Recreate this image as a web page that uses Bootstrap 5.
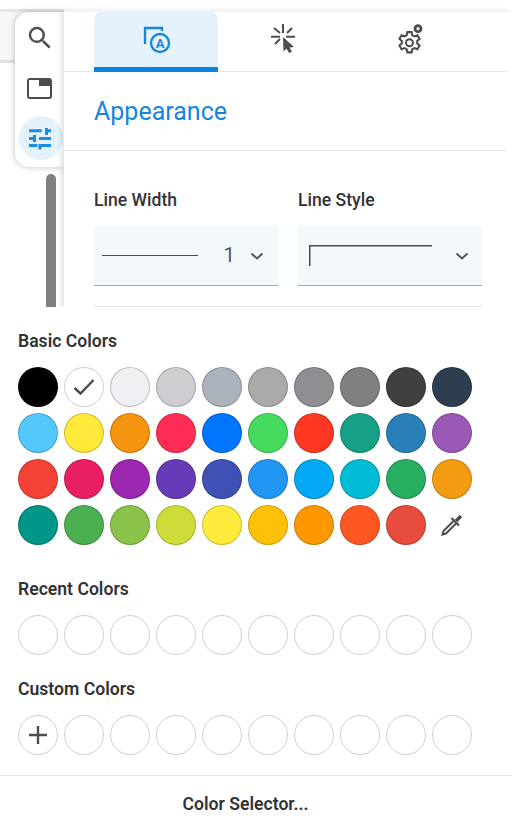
<!DOCTYPE html>
<html lang="en">
<head>
<meta charset="utf-8">
<title>Appearance</title>
<link href="https://cdn.jsdelivr.net/npm/bootstrap@5.3.0/dist/css/bootstrap.min.css" rel="stylesheet">
<style>
html,body{height:830px;overflow:hidden;background:#fff;font-family:Roboto,"Liberation Sans",sans-serif;color:#333}
.stage{width:512px;height:307px;overflow:hidden}
.rail{width:64px;height:307px;position:relative;background:linear-gradient(#fff 0 9px,#e6e6e6 9px 12px,#f7f7f7 12px 60px,#e0e0e0 60px 63px,#fff 63px)}
.toolstrip{position:absolute;left:15px;top:12px;width:49px;height:155px;background:#fff;border-radius:14px 0 0 14px;box-shadow:0 0 6px rgba(0,0,0,.25);padding-top:4px}
.toolbtn{width:44px;height:44px;border-radius:50%;margin:0 0 6px 4px}
.toolbtn svg{margin-right:3px}
.toolbtn.on{background:#e4f2fd}
.thumb{position:absolute;left:46px;top:174px;width:10px;height:133px;background:#808080;border-radius:5px 5px 0 0}
.sheet{margin-top:11px;height:296px;width:448px;background:#fff;border-top:1px solid #f3f3f3;box-shadow:-3px 0 5px rgba(0,0,0,.12);position:relative}
.tabrow{height:60px;width:443px;padding-left:30px;gap:3px;border-bottom:1px solid #e4e4e4}
.tabcell{width:124px;height:60px;padding-top:12px;text-align:center}
.tabcell svg{display:inline-block;vertical-align:top}
.tabcell.on{background:#e4f2fd;border-radius:7px 7px 0 0;border-bottom:5px solid #0a84dc}
.paneltitle{width:443px;height:79px;padding:24px 0 0 30px;border-bottom:1px solid #e4e4e4;color:#1486e0;font-size:25px;line-height:32px;font-weight:400;margin:0}
.fields{padding:34px 0 0 30px;gap:20px;width:418px}
.fieldcol{width:184px}
.fieldname{font-size:17.6px;font-weight:500;line-height:30px;height:41px;color:#333}
.pickbox{height:60px;background:#f3f8fc;border-bottom:1px solid #7ab0e0;padding:0 14px 0 8px;color:#555;font-size:20.5px}
.pickbox.styled{padding-left:11px;padding-right:13px}
.lineprev{display:block;width:96px;height:1.5px;background:#4d4d4d}
.sizeval{margin-right:15px}
.sep{margin:20px 0 0 30px;width:388px;height:1px;background:#e4e4e4}
.popup{height:523px;background:#fff;border-radius:0 12px 0 0;position:relative}
.heading{font-size:17.6px;font-weight:600;line-height:24px;margin:0;color:#333}
.dots{display:flex;flex-wrap:wrap;gap:6px;width:460px}
.dot{width:40px;height:40px;border-radius:50%;border:1px solid rgba(0,0,0,.2);display:flex;align-items:center;justify-content:center}
.dot.blank{border-color:#d0d0d0;background:#fff}
.dot.bare{border-color:transparent}
.basic{padding:22px 0 0 18px}
.basic .heading{margin-bottom:14px}
.recent{padding:32px 0 0 18px}
.recent .heading,.custom .heading{margin-bottom:14px}
.custom{padding:22px 0 0 18px}
.footbar{height:56px;width:491px;line-height:56px;text-align:center;font-size:17.6px;font-weight:600;color:#333}
.footwide{border-top:1px solid #e4e4e4;margin-top:20px}
</style>
</head>
<body>
<div class="stage d-flex">
  <div class="rail flex-shrink-0">
    <div class="thumb"></div>
    <div class="toolstrip">
      <div class="toolbtn d-flex align-items-center justify-content-center">
        <svg width="30" height="30" viewBox="0 0 24 24"><path fill="#4d4d4d" d="M15.5 14h-.79l-.28-.27A6.471 6.471 0 0 0 16 9.500 6.500 6.500 0 1 0 9.500 16c1.610 0 3.090-.59 4.230-1.570l.27.28v.79l5 4.990L20.490 19l-4.990-5zm-6 0C7.010 14 5 11.990 5 9.500S7.010 5 9.500 5 14 7.010 14 9.500 11.990 14 9.500 14z"/></svg>
      </div>
      <div class="toolbtn d-flex align-items-center justify-content-center">
        <svg width="25" height="21" viewBox="0 0 25 21"><rect x="1" y="1" width="23" height="19" rx="2" fill="none" stroke="#4d4d4d" stroke-width="2"/><path fill="#4d4d4d" d="M12 1h12v7H12z"/></svg>
      </div>
      <div class="toolbtn on d-flex align-items-center justify-content-center">
        <svg width="24" height="23" viewBox="0 0 24 23"><path fill="#1a8ee6" d="M1 2.300h12.700v3H1zM17 1h3v1.300h3v3h-3V8h-3zM1 10h4V8h3v7H5v-2H1zM11 10h12v3H11zM1 17h8.500v3H1zM10.500 17H23v3h-9.500v2.500h-3z"/></svg>
      </div>
    </div>
  </div>
  <div class="sheet">
    <div class="tabrow d-flex">
      <div class="tabcell on">
        <svg width="30" height="30" viewBox="0 0 30 30"><g fill="none" stroke="#1486e0" stroke-width="2.300"><path d="M4 20V4h17v3"/><circle cx="19" cy="19" r="9"/></g><text x="19" y="23.500" text-anchor="middle" font-family="Roboto" font-weight="700" font-size="13" fill="#1486e0">A</text></svg>
      </div>
      <div class="tabcell">
        <svg width="30" height="30" viewBox="0 0 30 30"><path stroke="#4d4d4d" stroke-width="2" fill="none" d="M15 0v9M3 12.700h9M18 12.700h9M6 4l6 5M19 9l5-5M7 20l5-5"/><path fill="#4d4d4d" d="M15 13l11 10-4.500.5 2.500 4-3 1.500-2.500-4.500-3 3z"/></svg>
      </div>
      <div class="tabcell">
        <svg width="30" height="30" viewBox="0 0 30 30"><g fill="none" stroke="#4d4d4d"><path transform="translate(14.500 18.700) scale(1.060) translate(-12 -16)" stroke-width="2" d="M10 6h4l.7 3 2 1 2.800-1 2 3.400-2.200 2v2.300l2.200 2-2 3.400-2.800-1-2 1-.7 3h-4l-.7-3-2-1-2.800 1-2-3.400 2.200-2v-2.300l-2.200-2 2-3.400 2.800 1 2-1z"/><circle stroke-width="2" cx="14.500" cy="18.700" r="3.500"/><circle stroke-width="2.800" cx="23" cy="4.700" r="3"/></g></svg>
      </div>
    </div>
    <h2 class="paneltitle">Appearance</h2>
    <div class="fields d-flex">
      <div class="fieldcol">
        <div class="fieldname">Line Width</div>
        <div class="pickbox d-flex align-items-center">
          <span class="lineprev"></span>
          <span class="ms-auto sizeval">1</span>
          <svg width="14" height="8" viewBox="0 0 14 8"><path d="M1.500 1.500L7 6.500l5.500-5" fill="none" stroke="#555" stroke-width="2"/></svg>
        </div>
      </div>
      <div class="fieldcol">
        <div class="fieldname">Line Style</div>
        <div class="pickbox styled d-flex align-items-center">
          <svg width="123" height="21" viewBox="0 0 123 21"><path d="M123 .75H.75V21" fill="none" stroke="#4d4d4d" stroke-width="1.500"/></svg>
          <svg class="ms-auto" width="14" height="8" viewBox="0 0 14 8"><path d="M1.500 1.500L7 6.500l5.500-5" fill="none" stroke="#555" stroke-width="2"/></svg>
        </div>
      </div>
    </div>
    <div class="sep"></div>
  </div>
</div>
<div class="popup">
  <div class="basic">
    <h3 class="heading">Basic Colors</h3>
    <div class="dots">
      <span class="dot" style="background:#000"></span>
      <span class="dot blank"><svg width="22" height="18" viewBox="0 0 22 18"><path d="M1.500 10l6 5.500L20.500 2" fill="none" stroke="#4d4d4d" stroke-width="2.400"/></svg></span>
      <span class="dot" style="background:#efeff4"></span>
      <span class="dot" style="background:#ceced2"></span>
      <span class="dot" style="background:#aab2bb"></span>
      <span class="dot" style="background:#aaa"></span>
      <span class="dot" style="background:#8e8e93"></span>
      <span class="dot" style="background:#808080"></span>
      <span class="dot" style="background:#404040"></span>
      <span class="dot" style="background:#2c3e50"></span>
      <span class="dot" style="background:#54c7fc"></span>
      <span class="dot" style="background:#ffe93b"></span>
      <span class="dot" style="background:#f7940f"></span>
      <span class="dot" style="background:#ff2d55"></span>
      <span class="dot" style="background:#0076ff"></span>
      <span class="dot" style="background:#44db5e"></span>
      <span class="dot" style="background:#ff3824"></span>
      <span class="dot" style="background:#16a085"></span>
      <span class="dot" style="background:#2980b9"></span>
      <span class="dot" style="background:#9b59b6"></span>
      <span class="dot" style="background:#f44336"></span>
      <span class="dot" style="background:#e91e63"></span>
      <span class="dot" style="background:#9c27b0"></span>
      <span class="dot" style="background:#673ab7"></span>
      <span class="dot" style="background:#3f51b5"></span>
      <span class="dot" style="background:#2196f3"></span>
      <span class="dot" style="background:#03a9f4"></span>
      <span class="dot" style="background:#00bcd4"></span>
      <span class="dot" style="background:#27ae60"></span>
      <span class="dot" style="background:#f39c12"></span>
      <span class="dot" style="background:#009688"></span>
      <span class="dot" style="background:#4caf50"></span>
      <span class="dot" style="background:#8bc34a"></span>
      <span class="dot" style="background:#cddc39"></span>
      <span class="dot" style="background:#ffeb3b"></span>
      <span class="dot" style="background:#ffc107"></span>
      <span class="dot" style="background:#ff9800"></span>
      <span class="dot" style="background:#ff5722"></span>
      <span class="dot" style="background:#e74c3c"></span>
      <span class="dot bare"><svg width="24" height="24" viewBox="0 0 24 24"><path fill="none" stroke="#4d4d4d" stroke-width="2" d="M14 7.500L3.500 18l-1 3.500 3.500-1L16.500 10"/><path fill="none" stroke="#4d4d4d" stroke-width="2.200" d="M11.500 5l7.500 7.500"/><path fill="none" stroke="#4d4d4d" stroke-width="3.600" d="M16 8l5-5"/></svg></span>
    </div>
  </div>
  <div class="recent">
    <h3 class="heading">Recent Colors</h3>
    <div class="dots">
      <span class="dot blank"></span><span class="dot blank"></span><span class="dot blank"></span><span class="dot blank"></span><span class="dot blank"></span><span class="dot blank"></span><span class="dot blank"></span><span class="dot blank"></span><span class="dot blank"></span><span class="dot blank"></span>
    </div>
  </div>
  <div class="custom">
    <h3 class="heading">Custom Colors</h3>
    <div class="dots">
      <span class="dot blank"><svg width="18" height="18" viewBox="0 0 18 18"><path d="M9 0v18M0 9h18" stroke="#4d4d4d" stroke-width="2.400"/></svg></span>
      <span class="dot blank"></span><span class="dot blank"></span><span class="dot blank"></span><span class="dot blank"></span><span class="dot blank"></span><span class="dot blank"></span><span class="dot blank"></span><span class="dot blank"></span><span class="dot blank"></span>
    </div>
  </div>
  <div class="footwide"><div class="footbar">Color Selector...</div></div>
</div>
<script src="https://cdn.jsdelivr.net/npm/bootstrap@5.3.0/dist/js/bootstrap.bundle.min.js"></script>
</body>
</html>
